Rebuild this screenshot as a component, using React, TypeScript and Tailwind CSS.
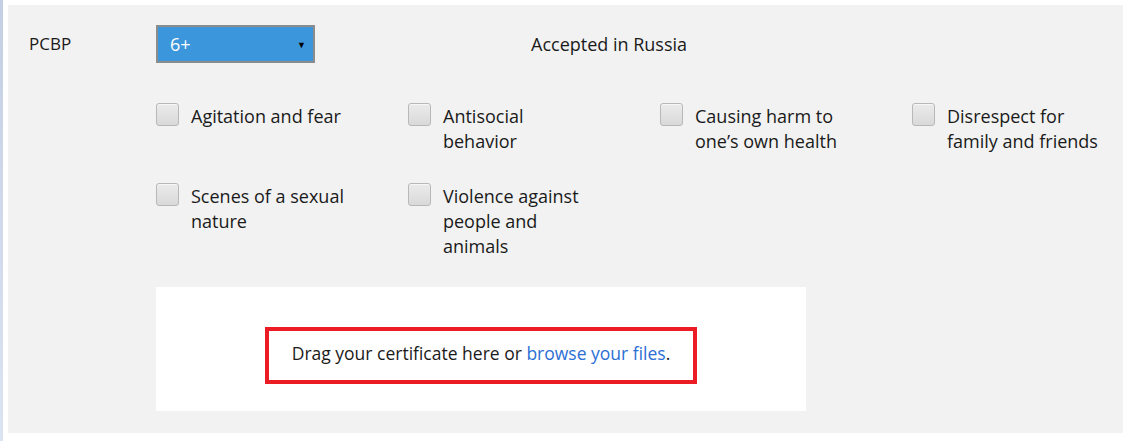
import { useState } from "react";

const RATINGS = ["0+", "6+", "12+", "16+", "18+"];

const CATEGORIES = [
  "Agitation and fear",
  "Antisocial behavior",
  "Causing harm to one\u2019s own health",
  "Disrespect for family and friends",
  "Scenes of a sexual nature",
  "Violence against people and animals",
];

function Checkbox({ label }: { label: string }) {
  const [checked, setChecked] = useState(false);
  return (
    <label className="flex items-start gap-[12px] cursor-pointer">
      <span
        onClick={() => setChecked(!checked)}
        className="mt-[-1px] w-[23px] h-[23px] shrink-0 rounded-[3px] border border-[#b8b8b8] bg-gradient-to-b from-[#ebebeb] to-[#d9d9d9] shadow-[inset_0_1px_0_#f7f7f7] flex items-center justify-center text-[14px] text-[#333]"
      >
        {checked ? "\u2713" : ""}
      </span>
      <span className="w-[155px] text-[18px] leading-[25px] text-[#1a1a1a]">
        {label}
      </span>
    </label>
  );
}

export default function App() {
  const [rating, setRating] = useState("6+");

  return (
    <div
      className="w-[1129px] h-[441px] bg-white flex"
      style={{ fontFamily: '"Open Sans", "Noto Sans", sans-serif' }}
    >
      {/* left window strip */}
      <div className="w-[3px] h-full shrink-0 bg-gradient-to-b from-[#c4cfe3] to-[#dbe4f1]" />

      <div className="ml-[5px] mt-[5px] w-[1115px] h-[428px] shrink-0 bg-[#f2f2f2] pl-[21px] pt-[20px] flex">
        <div className="w-[127px] shrink-0 h-[38px] flex items-center text-[17px] text-[#1a1a1a]">
          PCBP
        </div>

        <div className="flex flex-col">
          {/* rating row */}
          <div className="flex items-center h-[38px]">
            <div className="relative w-[159px] h-[38px] border-2 border-[#8c8c8c] bg-[#3c96dc]">
              <select
                value={rating}
                onChange={(e) => setRating(e.target.value)}
                className="appearance-none w-full h-full bg-transparent text-white text-[18px] pl-[12px] outline-none"
              >
                {RATINGS.map((r) => (
                  <option key={r} value={r} className="text-black">
                    {r}
                  </option>
                ))}
              </select>
              <span className="absolute right-[7px] top-[11px] text-[9px] text-black pointer-events-none">
                &#9660;
              </span>
            </div>
            <div className="ml-[216px] text-[18px] text-[#1a1a1a]">
              Accepted in Russia
            </div>
          </div>

          {/* categories */}
          <div className="mt-[41px] grid grid-cols-[252px_252px_252px_200px] gap-y-[30px]">
            {CATEGORIES.map((c) => (
              <Checkbox key={c} label={c} />
            ))}
          </div>

          {/* drop zone */}
          <div className="mt-[28px] w-[650px] h-[124px] bg-white flex justify-center pt-[40px]">
            <div className="w-[432px] h-[57px] border-[4px] border-[#ec1c24] flex items-center justify-center pb-[4px] text-[17.5px] text-[#1a1a1a]">
              <span>
                Drag your certificate here or{" "}
                <a href="#" className="text-[#2b6fd4]">
                  browse your files
                </a>
                .
              </span>
            </div>
          </div>
        </div>
      </div>
    </div>
  );
}
